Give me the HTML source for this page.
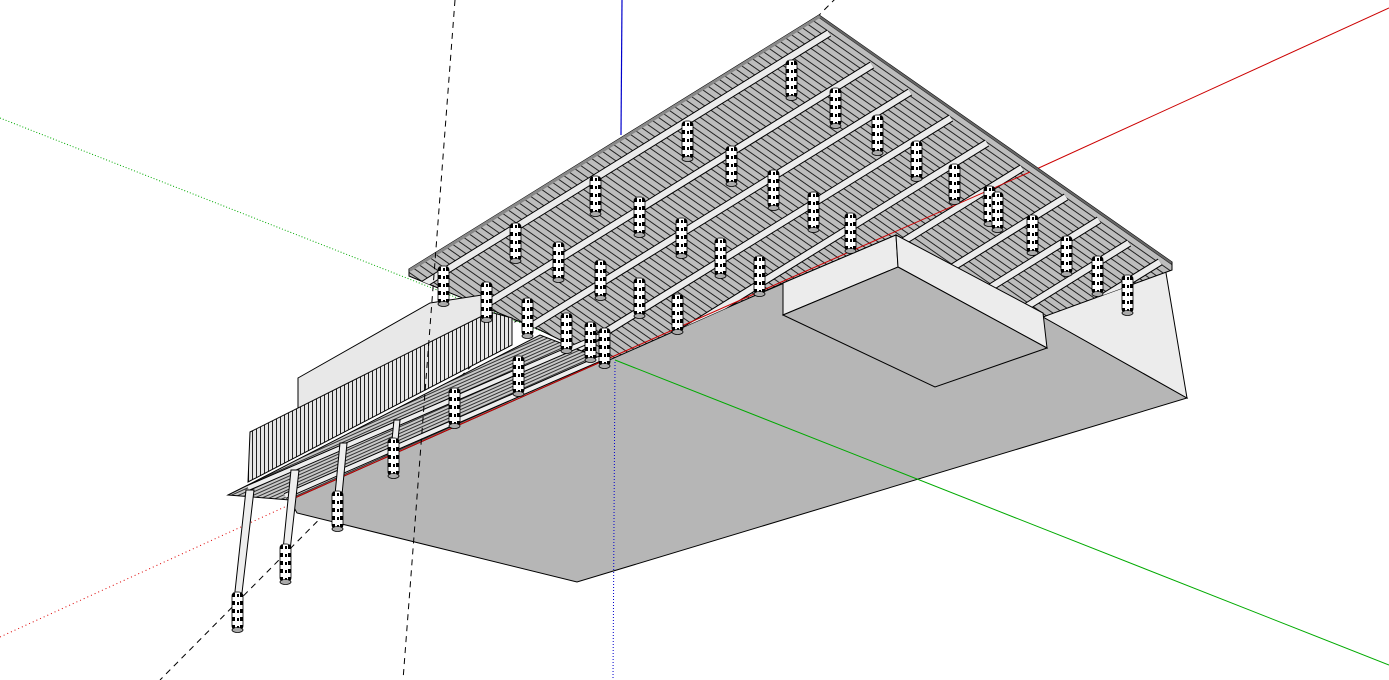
<!DOCTYPE html>
<html><head><meta charset="utf-8"><style>html,body{margin:0;padding:0;background:#fff;overflow:hidden}svg{display:block}</style></head>
<body>
<svg width="1389" height="680" viewBox="0 0 1389 680" xmlns="http://www.w3.org/2000/svg">
<defs>
<pattern id="hatch" width="6" height="6" patternUnits="userSpaceOnUse" patternTransform="rotate(35)">
<rect width="6" height="6" fill="#bdbdbd"/><rect width="6" height="1" fill="#222"/></pattern>
<pattern id="deck" width="3" height="3" patternUnits="userSpaceOnUse" patternTransform="rotate(-24)">
<rect width="3" height="3" fill="#c8c8c8"/><rect width="3" height="1" fill="#333"/></pattern>
<pattern id="rail" width="4" height="4" patternUnits="userSpaceOnUse">
<rect width="4" height="4" fill="#e6e6e6"/><rect width="1" height="4" fill="#222"/></pattern>
<pattern id="str" width="11" height="8" patternUnits="userSpaceOnUse" x="-5">
<rect width="11" height="8" fill="#fff"/><rect x="0" y="1" width="3" height="4" fill="#000"/><rect x="5" y="2" width="2" height="3" fill="#000"/><rect x="8" y="1" width="3" height="4" fill="#000"/></pattern>
<clipPath id="roofc"><polygon points="409,269 819,15 1172,262 1172,270 1043,317 896,235 783,283 605,362 540,330 409,276"/></clipPath>
<g id="p"><rect x="-5" y="0" width="11" height="38" rx="4" fill="url(#str)" stroke="#000" stroke-width="0.8"/><ellipse cx="0.5" cy="38" rx="5.5" ry="2.5" fill="#aaa" stroke="#000" stroke-width="0.8"/></g>
</defs>

<line x1="0" y1="118" x2="615" y2="360" stroke="#0a0" stroke-width="1" stroke-dasharray="1,2"/>
<line x1="844" y1="-10" x2="160" y2="680" stroke="#000" stroke-width="1" stroke-dasharray="6,5"/>
<line x1="0" y1="637" x2="300" y2="500" stroke="#d00" stroke-width="1" stroke-dasharray="1,3"/>
<line x1="622" y1="0" x2="621" y2="135" stroke="#00c" stroke-width="1.2"/>
<line x1="1030" y1="172" x2="1389" y2="8" stroke="#c00" stroke-width="1"/>

<polygon points="290,500 297,513 577,582 1187,398 1043,317 896,235 605,360" fill="#b6b6b6" stroke="#000" stroke-width="1"/>
<polygon points="1043,317 1165,267 1187,398" fill="#ececec" stroke="#000" stroke-width="1"/>

<polygon points="409,269 819,15 1172,262 1172,270 1043,317 896,235 783,283 605,362 540,330 409,276" fill="url(#hatch)" stroke="#000" stroke-width="1"/>
<g clip-path="url(#roofc)">
<polyline points="819,15 1172,262" stroke="#666" stroke-width="4" fill="none"/>
<polyline points="409,269 819,15" stroke="#888" stroke-width="6" fill="none"/>
<g stroke="#000" stroke-width="8" fill="none">
<line x1="829" y1="33" x2="400" y2="299"/><line x1="872" y1="65" x2="440" y2="333"/>
<line x1="910" y1="92" x2="480" y2="358"/><line x1="951" y1="118" x2="520" y2="385"/>
<line x1="987" y1="143" x2="556" y2="410"/><line x1="1022" y1="168" x2="590" y2="435"/>
<line x1="1066" y1="197" x2="900" y2="300"/><line x1="1099" y1="220" x2="930" y2="325"/>
<line x1="1129" y1="243" x2="960" y2="348"/><line x1="1160" y1="262" x2="990" y2="367"/>
</g>
<g stroke="#ececec" stroke-width="6" fill="none">
<line x1="829" y1="33" x2="400" y2="299"/><line x1="872" y1="65" x2="440" y2="333"/>
<line x1="910" y1="92" x2="480" y2="358"/><line x1="951" y1="118" x2="520" y2="385"/>
<line x1="987" y1="143" x2="556" y2="410"/><line x1="1022" y1="168" x2="590" y2="435"/>
<line x1="1066" y1="197" x2="900" y2="300"/><line x1="1099" y1="220" x2="930" y2="325"/>
<line x1="1129" y1="243" x2="960" y2="348"/><line x1="1160" y1="262" x2="990" y2="367"/>
</g>
</g>

<polygon points="783,283 896,235 898,267 783,315" fill="#ececec" stroke="#000" stroke-width="1"/>
<polygon points="896,235 1043,313 1047,348 898,267" fill="#ececec" stroke="#000" stroke-width="1"/>
<polygon points="783,315 898,267 1047,348 935,387" fill="#b6b6b6" stroke="#000" stroke-width="1"/>

<polygon points="298,378 430,303 482,295 492,312 298,410" fill="#e8e8e8" stroke="#000" stroke-width="1"/>
<polygon points="228,495 248,485 540,335 605,360 290,500" fill="url(#deck)" stroke="#000" stroke-width="1"/>
<polygon points="250,432 490,312 512,318 512,345 248,482" fill="url(#rail)" stroke="#000" stroke-width="1"/>
<g stroke="#000" stroke-width="6" fill="none"><line x1="248" y1="488" x2="600" y2="336"/><line x1="285" y1="496" x2="608" y2="355"/></g>
<g stroke="#eee" stroke-width="4" fill="none"><line x1="248" y1="488" x2="600" y2="336"/><line x1="285" y1="496" x2="608" y2="355"/></g>
<line x1="290" y1="500" x2="605" y2="360" stroke="#c00" stroke-width="1"/>
<line x1="605" y1="360" x2="1030" y2="172" stroke="#c00" stroke-width="1"/>

<g fill="#eee" stroke="#000" stroke-width="1">
<polygon points="246,490 254,490 240,610 233,610"/>
<polygon points="291,470 299,470 289,560 282,560"/>
<polygon points="340,443 347,443 341,505 334,505"/>
<polygon points="394,420 400,420 397,450 391,450"/>
</g>

<g>
<use href="#p" x="791" y="60"/><use href="#p" x="835" y="88"/><use href="#p" x="877" y="115"/>
<use href="#p" x="916" y="141"/><use href="#p" x="954" y="164"/><use href="#p" x="989" y="186"/>
<use href="#p" x="997" y="192"/><use href="#p" x="1032" y="215"/><use href="#p" x="1066" y="236"/>
<use href="#p" x="1097" y="256"/><use href="#p" x="1127" y="275"/>
<use href="#p" x="687" y="121"/><use href="#p" x="731" y="146"/><use href="#p" x="773" y="170"/>
<use href="#p" x="813" y="192"/><use href="#p" x="850" y="213"/>
<use href="#p" x="595" y="176"/><use href="#p" x="639" y="197"/><use href="#p" x="681" y="218"/>
<use href="#p" x="720" y="238"/><use href="#p" x="759" y="256"/>
<use href="#p" x="515" y="223"/><use href="#p" x="558" y="242"/><use href="#p" x="600" y="260"/>
<use href="#p" x="639" y="278"/><use href="#p" x="677" y="294"/>
<use href="#p" x="443" y="266"/><use href="#p" x="486" y="282"/><use href="#p" x="527" y="298"/>
<use href="#p" x="566" y="313"/><use href="#p" x="590" y="322"/><use href="#p" x="604" y="328"/>
<use href="#p" x="518" y="356"/><use href="#p" x="454" y="388"/>
<use href="#p" x="393" y="438"/><use href="#p" x="337" y="491"/><use href="#p" x="285" y="544"/><use href="#p" x="237" y="592"/>
</g>

<line x1="455" y1="0" x2="403" y2="680" stroke="#000" stroke-width="1" stroke-dasharray="6,5"/>
<line x1="615" y1="360" x2="1389" y2="665" stroke="#0a0" stroke-width="1"/>
<line x1="615" y1="362" x2="613" y2="680" stroke="#00c" stroke-width="1" stroke-dasharray="1,2"/>
</svg>
</body></html>
